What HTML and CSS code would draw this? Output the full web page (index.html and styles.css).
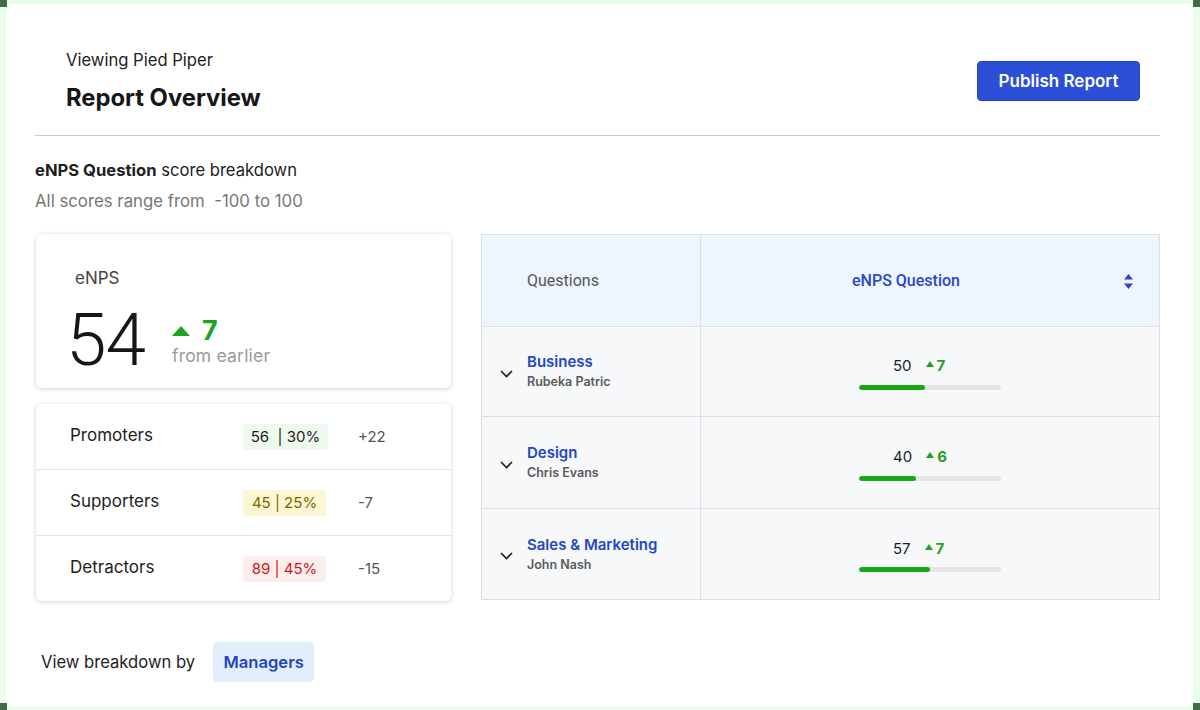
FILE: index.html
```html
<!DOCTYPE html>
<html lang="en">
<head>
<meta charset="utf-8">
<title>Report Overview</title>
<link rel="stylesheet" href="styles.css">
</head>
<body>
<div class="frame">
  <span class="corner corner-tl"></span>
  <span class="corner corner-tr"></span>
  <span class="corner corner-bl"></span>
  <span class="corner corner-br"></span>
  <main class="page">
    <header class="head">
      <div class="titles">
        <div class="eyebrow">Viewing Pied Piper</div>
        <h1 class="title">Report Overview</h1>
      </div>
      <button class="publish">Publish Report</button>
    </header>
    <hr class="rule">
    <section class="intro">
      <p class="intro-title"><b>eNPS Question</b> score breakdown</p>
      <p class="intro-sub">All scores range from &nbsp;-100 to 100</p>
    </section>

    <div class="content">
      <div class="left">
        <div class="card score-card">
          <div class="score-label">eNPS</div>
          <div class="score-main">
            <span class="score-num">54</span>
            <div class="score-delta">
              <div class="delta-line">
                <svg class="tri-big" width="18" height="10" viewBox="0 0 18 10"><path d="M9 0 L18 10 L0 10 Z" fill="#1fa31f"/></svg>
                <span class="delta-val">7</span>
              </div>
              <div class="delta-note">from earlier</div>
            </div>
          </div>
        </div>

        <div class="card stats-card">
          <div class="stat-row">
            <span class="stat-label">Promoters</span>
            <span class="badge badge-green">56 &nbsp;| 30%</span>
            <span class="stat-diff">+22</span>
          </div>
          <div class="stat-row">
            <span class="stat-label">Supporters</span>
            <span class="badge badge-yellow">45 | 25%</span>
            <span class="stat-diff">-7</span>
          </div>
          <div class="stat-row">
            <span class="stat-label">Detractors</span>
            <span class="badge badge-red">89 | 45%</span>
            <span class="stat-diff">-15</span>
          </div>
        </div>
      </div>

      <div class="table">
        <div class="th th-q">Questions</div>
        <div class="th th-s">
          <span class="th-s-text">eNPS Question</span>
          <svg class="sort" width="9" height="15" viewBox="0 0 9 15"><path d="M4.5 0 L9 5.5 L0 5.5 Z M0 9.5 L9 9.5 L4.5 15 Z" fill="#2a48c8"/></svg>
        </div>

        <div class="td td-q">
          <svg class="chev" width="13" height="8" viewBox="0 0 13 8"><path d="M1 1 L6.5 6.5 L12 1" fill="none" stroke="#1d1d1d" stroke-width="1.6"/></svg>
          <div class="q-text"><div class="q-name">Business</div><div class="q-owner">Rubeka Patric</div></div>
        </div>
        <div class="td td-s">
          <div class="meter">
            <div class="meter-line"><span class="m-num">50</span><svg class="tri-sm" width="8" height="6" viewBox="0 0 8 6"><path d="M4 0 L8 6 L0 6 Z" fill="#1fa31f"/></svg><span class="m-delta">7</span></div>
            <div class="bar"><div class="bar-fill" style="width:66px"></div></div>
          </div>
        </div>

        <div class="td td-q">
          <svg class="chev" width="13" height="8" viewBox="0 0 13 8"><path d="M1 1 L6.5 6.5 L12 1" fill="none" stroke="#1d1d1d" stroke-width="1.6"/></svg>
          <div class="q-text"><div class="q-name">Design</div><div class="q-owner">Chris Evans</div></div>
        </div>
        <div class="td td-s">
          <div class="meter">
            <div class="meter-line"><span class="m-num">40</span><svg class="tri-sm" width="8" height="6" viewBox="0 0 8 6"><path d="M4 0 L8 6 L0 6 Z" fill="#1fa31f"/></svg><span class="m-delta">6</span></div>
            <div class="bar"><div class="bar-fill" style="width:57px"></div></div>
          </div>
        </div>

        <div class="td td-q">
          <svg class="chev" width="13" height="8" viewBox="0 0 13 8"><path d="M1 1 L6.5 6.5 L12 1" fill="none" stroke="#1d1d1d" stroke-width="1.6"/></svg>
          <div class="q-text"><div class="q-name">Sales &amp; Marketing</div><div class="q-owner">John Nash</div></div>
        </div>
        <div class="td td-s">
          <div class="meter">
            <div class="meter-line"><span class="m-num">57</span><svg class="tri-sm" width="8" height="6" viewBox="0 0 8 6"><path d="M4 0 L8 6 L0 6 Z" fill="#1fa31f"/></svg><span class="m-delta">7</span></div>
            <div class="bar"><div class="bar-fill" style="width:71px"></div></div>
          </div>
        </div>
      </div>
    </div>

    <div class="breakdown">
      <span class="breakdown-label">View breakdown by</span>
      <button class="chip">Managers</button>
    </div>
  </main>
</div>
</body>
</html>
```

FILE: styles.css
```css
* { box-sizing: border-box; }

html, body {
  margin: 0;
  padding: 0;
}

body {
  width: 1200px;
  height: 710px;
  background: #eafcea;
  font-family: Inter, "Noto Sans", "Liberation Sans", sans-serif;
  color: #1d1d1d;
  overflow: hidden;
}

.frame {
  position: relative;
  width: 1200px;
  height: 710px;
  padding: 4px 7px 3px 6px;
}

.corner {
  position: absolute;
  width: 7px;
  height: 7px;
  background: #3f6b47;
}
.corner-tl { left: 0; top: 0; }
.corner-tr { right: 0; top: 0; }
.corner-bl { left: 0; bottom: 0; }
.corner-br { right: 0; bottom: 0; }

.page {
  background: #fff;
  height: 703px;
  padding: 0 33px 0 29px;
}

/* header */
.head {
  display: flex;
  justify-content: space-between;
  align-items: center;
  padding: 45px 20px 22px 31px;
}

.eyebrow {
  font-size: 16.6px;
  line-height: 22px;
  color: #1d1d1d;
}

.title {
  margin: 12px 0 0;
  font-size: 23.8px;
  line-height: 30px;
  font-weight: 700;
  color: #161616;
}

.publish {
  width: 163px;
  height: 40px;
  background: #2b4fd6;
  border: 1px solid #2446c4;
  border-radius: 4px;
  color: #fff;
  font-family: inherit;
  font-size: 17px;
  font-weight: 600;
  cursor: pointer;
}

.rule {
  margin: 0;
  border: 0;
  border-top: 1.5px solid #c9c9c9;
}

/* intro */
.intro {
  padding-top: 22px;
}
.intro-title {
  margin: 0;
  font-size: 16.6px;
  line-height: 24px;
  color: #1d1d1d;
}
.intro-title b { font-weight: 700; }
.intro-sub {
  margin: 7px 0 0;
  font-size: 16.8px;
  line-height: 24px;
  color: #767676;
}

/* content */
.content {
  display: grid;
  grid-template-columns: 416px 679px;
  column-gap: 30px;
  margin-top: 21px;
  align-items: start;
}

.left {
  display: flex;
  flex-direction: column;
  gap: 16px;
  padding-left: 1px;
}

.card {
  background: #fff;
  border-radius: 5px;
  box-shadow: 0 1px 5px rgba(0, 0, 0, 0.17), 0 0 1px rgba(0, 0, 0, 0.08);
}

.score-card {
  height: 154px;
  padding: 32px 20px 0 39px;
}

.score-label {
  font-size: 17px;
  line-height: 24px;
  color: #444;
}

.score-main {
  display: flex;
  align-items: center;
  margin-top: 6px;
  margin-left: -9px;
}

.score-num {
  font-family: Roboto, "Liberation Sans", sans-serif;
  font-weight: 300;
  font-size: 73px;
  line-height: 80px;
  color: #161616;
  letter-spacing: -1px;
  margin-top: 4px;
}

.score-delta {
  margin-left: 27px;
  margin-top: 8px;
}

.delta-line {
  display: flex;
  align-items: center;
  gap: 12px;
  height: 28px;
}

.delta-val {
  font-size: 27px;
  font-weight: 700;
  color: #1fa31f;
  line-height: 28px;
}

.delta-note {
  font-size: 17.5px;
  line-height: 22px;
  color: #9a9a9a;
  letter-spacing: 0.2px;
}

.stats-card {
  height: 197px;
  display: flex;
  flex-direction: column;
}

.stat-row {
  flex: 1;
  display: flex;
  align-items: center;
  padding-left: 34px;
  border-bottom: 1.5px solid #e4e4e4;
}
.stat-row:last-child { border-bottom: 0; }

.stat-label {
  width: 173px;
  font-size: 17px;
  color: #1d1d1d;
  margin-top: -3px;
}

.badge {
  display: inline-block;
  min-width: 83px;
  height: 26px;
  line-height: 26px;
  padding: 0 7px;
  font-size: 15px;
  border-radius: 3px;
  text-align: center;
}
.badge-green { background: #eefaee; color: #1d1d1d; min-width: 85px; }
.badge-yellow { background: #fdf6d3; color: #7d6400; }
.badge-red { background: #fdeeee; color: #d3161c; }

.stat-diff {
  margin-left: 32px;
  font-size: 15px;
  color: #555;
}
.badge-green + .stat-diff { margin-left: 30px; }

/* table */
.table {
  display: grid;
  grid-template-columns: 219px 1fr;
  grid-template-rows: 92px 90px 92px 90px;
  border: 1px solid #dcdfe3;
}

.th {
  background: #eef5fe;
  display: flex;
  align-items: center;
  font-family: Roboto, "Liberation Sans", sans-serif;
}
.th-q {
  padding-left: 45px;
  font-size: 16px;
  color: #555;
  border-right: 1px solid #dcdfe3;
  border-bottom: 1px solid #dcdfe3;
}
.th-s {
  position: relative;
  justify-content: center;
  padding-right: 48px;
  border-bottom: 1px solid #dcdfe3;
}
.th-s-text {
  font-size: 16px;
  font-weight: 500;
  color: #2a48c8;
}
.sort {
  position: absolute;
  right: 26px;
  top: 39px;
}

.td {
  background: #f7f8fa;
  border-bottom: 1px solid #dcdfe3;
  display: flex;
  align-items: center;
}
.td:nth-last-child(-n+2) { border-bottom: 0; }

.td-q {
  padding-left: 18px;
  border-right: 1px solid #dcdfe3;
  gap: 14px;
}
.chev { margin-top: 4px; }

.q-name {
  font-size: 15px;
  font-weight: 600;
  color: #2347c4;
  line-height: 20px;
}
.q-owner {
  font-size: 12.5px;
  font-weight: 600;
  color: #5a5a5a;
  line-height: 18px;
  margin-top: 1px;
}

.td-s { justify-content: center; }

.meter {
  width: 142px;
  margin-top: 2px;
}
.meter-line {
  display: flex;
  align-items: center;
  padding-left: 34px;
  height: 20px;
}
.m-num {
  font-size: 15px;
  color: #1d1d1d;
}
.tri-sm { margin-left: 14px; margin-bottom: 3px; }
.m-delta {
  margin-left: 3px;
  font-size: 15px;
  font-weight: 700;
  color: #1fa31f;
}

.bar {
  margin-top: 9px;
  height: 5px;
  background: #e6e6e7;
  border-radius: 3px;
  overflow: hidden;
}
.bar-fill {
  height: 100%;
  background: #17a817;
  border-radius: 3px;
}

/* breakdown */
.breakdown {
  display: flex;
  align-items: center;
  gap: 18px;
  margin-top: 41px;
  padding-left: 6px;
}
.breakdown-label {
  font-size: 16.6px;
  color: #1d1d1d;
}
.chip {
  width: 101px;
  height: 40px;
  border: 0;
  border-radius: 4px;
  background: #e3eefd;
  color: #2345bf;
  font-family: inherit;
  font-size: 16.6px;
  font-weight: 600;
  cursor: pointer;
}
```
